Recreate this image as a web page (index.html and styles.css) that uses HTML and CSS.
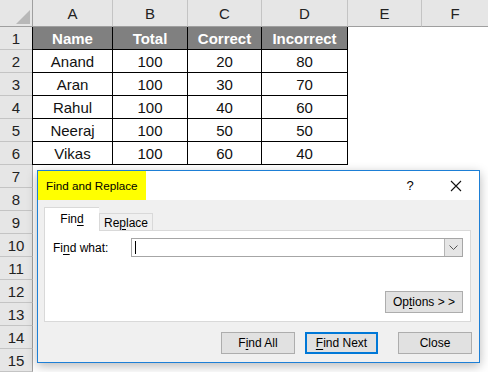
FILE: index.html
```html
<!DOCTYPE html>
<html lang="en">
<head>
  <meta charset="UTF-8" />
  <title>Find and Replace</title>
  <link rel="stylesheet" href="styles.css">
</head>
<body>

  <div class="sheet">
    <div class="corner">
      <svg width="33" height="27" viewBox="0 0 33 27"><polygon points="30,10 30,24 16,24" fill="#b8b8b8"/></svg>
    </div>
    <div class="col">A</div>
    <div class="col">B</div>
    <div class="col">C</div>
    <div class="col">D</div>
    <div class="col">E</div>
    <div class="col last">F</div>

    <div class="rowhead">1</div>
    <div class="cell th first">Name</div>
    <div class="cell th">Total</div>
    <div class="cell th">Correct</div>
    <div class="cell th">Incorrect</div>

    <div class="rowhead">2</div>
    <div class="cell first">Anand</div>
    <div class="cell">100</div>
    <div class="cell">20</div>
    <div class="cell">80</div>

    <div class="rowhead">3</div>
    <div class="cell first">Aran</div>
    <div class="cell">100</div>
    <div class="cell">30</div>
    <div class="cell">70</div>

    <div class="rowhead">4</div>
    <div class="cell first">Rahul</div>
    <div class="cell">100</div>
    <div class="cell">40</div>
    <div class="cell">60</div>

    <div class="rowhead">5</div>
    <div class="cell first">Neeraj</div>
    <div class="cell">100</div>
    <div class="cell">50</div>
    <div class="cell">50</div>

    <div class="rowhead">6</div>
    <div class="cell first">Vikas</div>
    <div class="cell">100</div>
    <div class="cell">60</div>
    <div class="cell">40</div>

    <div class="rowhead">7</div>
    <div class="rowhead">8</div>
    <div class="rowhead">9</div>
    <div class="rowhead">10</div>
    <div class="rowhead">11</div>
    <div class="rowhead">12</div>
    <div class="rowhead">13</div>
    <div class="rowhead">14</div>
    <div class="rowhead">15</div>
  </div>

  <!-- Find and Replace dialog floating over the sheet -->
  <div class="dialog">
    <div class="titlebar">
      <div class="title">Find and Replace</div>
      <span class="title-btn help">?</span>
      <span class="title-btn">
        <svg width="12" height="12" viewBox="0 0 12 12"><path d="M1 1 L11 11 M11 1 L1 11" stroke="#111" stroke-width="1.1" fill="none"/></svg>
      </span>
    </div>

    <div class="dlg-body">
      <div class="tabs">
        <div class="tab active">Fin<u>d</u></div>
        <div class="tab">Re<u>p</u>lace</div>
      </div>

      <div class="panel">
        <div class="find-row">
          <label class="find-label">Fi<u>n</u>d what:</label>
          <div class="combo">
            <span class="caret"></span>
            <span class="drop">
              <svg width="9" height="5" viewBox="0 0 9 5"><path d="M0.5 0.5 L4.5 4.5 L8.5 0.5" stroke="#555" stroke-width="1" fill="none"/></svg>
            </span>
          </div>
        </div>
        <div class="options-row">
          <button class="btn options-btn">Op<u>t</u>ions &gt; &gt;</button>
        </div>
      </div>

      <div class="actions">
        <button class="btn">F<u>i</u>nd All</button>
        <button class="btn default-btn"><u>F</u>ind Next</button>
        <button class="btn close-btn">Close</button>
      </div>
    </div>
  </div>

</body>
</html>
```

FILE: styles.css
```css
/* PAGE */
body {
  margin: 0;
  width: 488px;
  height: 372px;
  overflow: hidden;
  background: #fff;
  position: relative;
  font-family: 'Liberation Sans', Arial, sans-serif;
}

/* SPREADSHEET */
.sheet {
  display: grid;
  grid-template-columns: 33px 80px 75px 74px 86px 74px 66px;
  grid-template-rows: 27px repeat(15, 23px);
  font-size: 15px;
  color: #111;
}
.corner {
  background: #e6e6e6;
  border-right: 1px solid #9f9f9f;
  border-bottom: 1px solid #9f9f9f;
  box-sizing: border-box;
  overflow: hidden;
}
.corner svg {
  display: block;
}
.col {
  background: #e6e6e6;
  border-right: 1px solid #c4c4c4;
  border-bottom: 1px solid #9f9f9f;
  box-sizing: border-box;
  display: flex;
  align-items: center;
  justify-content: center;
  color: #222;
}
.col.last {
  border-right: none;
}
.rowhead {
  grid-column: 1;
  background: #e6e6e6;
  border-right: 1px solid #9f9f9f;
  border-bottom: 1px solid #c4c4c4;
  box-sizing: border-box;
  display: flex;
  align-items: center;
  justify-content: center;
  color: #222;
}
.cell {
  box-sizing: border-box;
  border-right: 1px solid #000;
  border-bottom: 1px solid #000;
  display: flex;
  align-items: center;
  justify-content: center;
  padding-top: 1px;
}
.cell.first {
  margin-left: -1px;
  border-left: 1px solid #000;
}
.cell.th {
  background: #808080;
  color: #fff;
  font-weight: bold;
}

/* DIALOG */
.dialog {
  position: absolute;
  left: 37px;
  top: 170px;
  width: 443px;
  height: 193px;
  box-sizing: border-box;
  border: 1px solid #1d7fd6;
  background: #f0f0f0;
  box-shadow: 0 3px 10px rgba(0, 0, 0, 0.28);
  font-size: 12px;
  color: #000;
  display: flex;
  flex-direction: column;
}
.dialog u {
  text-decoration: underline;
  text-underline-offset: 2px;
}
.titlebar {
  height: 29px;
  background: #fff;
  display: flex;
  align-items: center;
  flex-shrink: 0;
}
.title {
  background: #ffff00;
  width: 108px;
  height: 29px;
  line-height: 29px;
  padding-left: 8px;
  box-sizing: border-box;
  font-size: 11.7px;
  white-space: nowrap;
}
.title-btn {
  width: 46px;
  height: 29px;
  display: flex;
  align-items: center;
  justify-content: center;
}
.title-btn.help {
  margin-left: auto;
  font-size: 13px;
}

.dlg-body {
  flex: 1;
  padding: 7px 8px 8px 6px;
  display: flex;
  flex-direction: column;
}
.tabs {
  display: flex;
  align-items: flex-end;
  height: 24px;
}
.tab {
  box-sizing: border-box;
  border: 1px solid #d9d9d9;
  border-bottom: none;
  height: 18px;
  width: 54px;
  display: flex;
  align-items: center;
  justify-content: center;
  background: #f0f0f0;
}
.tab.active {
  position: relative;
  z-index: 1;
  height: 24px;
  width: 55px;
  background: #fff;
  border-right: none;
  padding-bottom: 1px;
}
.panel {
  margin-top: -1px;
  background: #fff;
  border: 1px solid #d9d9d9;
  padding: 7px 7px 8px 8px;
}
.find-row {
  display: flex;
  align-items: center;
  height: 19px;
}
.find-label {
  width: 78px;
}
.combo {
  flex: 1;
  height: 19px;
  box-sizing: border-box;
  border: 1px solid #a6a6a6;
  display: flex;
  align-items: center;
  padding-left: 3px;
}
.caret {
  width: 1px;
  height: 13px;
  background: #000;
}
.drop {
  margin-left: auto;
  width: 17px;
  height: 17px;
  background: #e5e5e5;
  border-left: 1px solid #b5b5b5;
  display: flex;
  align-items: center;
  justify-content: center;
}
.options-row {
  display: flex;
  justify-content: flex-end;
  margin-top: 34px;
}

.btn {
  font-family: 'Liberation Sans', Arial, sans-serif;
  font-size: 12px;
  color: #000;
  height: 22px;
  width: 74px;
  box-sizing: border-box;
  background: #e1e1e1;
  border: 1px solid #adadad;
  padding: 0;
  cursor: pointer;
}
.options-btn {
  width: 78px;
}
.actions {
  display: flex;
  justify-content: flex-end;
  margin-top: 10px;
  margin-right: -1px;
}
.default-btn {
  width: 73px;
  margin-left: 10px;
  border: 2px solid #0078d7;
}
.close-btn {
  margin-left: 20px;
}
```
